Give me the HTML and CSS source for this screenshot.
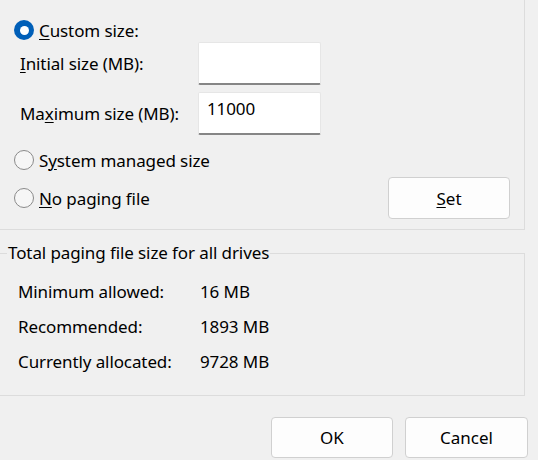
FILE: index.html
```html
<!DOCTYPE html>
<html>
<head>
<meta charset="utf-8">
<link rel="stylesheet" href="styles.css">
</head>
<body>
<div class="page">
  <div class="group-top">
    <label class="radio-row">
      <span class="radio checked"></span>
      <span class="radio-text"><u>C</u>ustom size:</span>
    </label>
    <div class="field-row first">
      <span class="field-label"><u>I</u>nitial size (MB):</span>
      <div class="input"></div>
    </div>
    <div class="field-row">
      <span class="field-label">Ma<u>x</u>imum size (MB):</span>
      <div class="input">11000</div>
    </div>
    <label class="radio-row system">
      <span class="radio"></span>
      <span class="radio-text">S<u>y</u>stem managed size</span>
    </label>
    <div class="nopaging-row">
      <label class="radio-row inline">
        <span class="radio"></span>
        <span class="radio-text"><u>N</u>o paging file</span>
      </label>
      <button class="btn set"><u>S</u>et</button>
    </div>
  </div>

  <fieldset class="group-total">
    <legend>Total paging file size for all drives</legend>
    <div class="stats">
      <span>Minimum allowed:</span><span>16 MB</span>
      <span>Recommended:</span><span>1893 MB</span>
      <span>Currently allocated:</span><span>9728 MB</span>
    </div>
  </fieldset>

  <div class="actions">
    <button class="btn ok">OK</button>
    <button class="btn cancel">Cancel</button>
  </div>
</div>
</body>
</html>
```
FILE: styles.css
```css
* { box-sizing: border-box; }
html, body {
  margin: 0;
  padding: 0;
  background: #f0f0f0;
}
body {
  font-family: "Noto Sans", "Open Sans", sans-serif;
  font-size: 17px;
  letter-spacing: -0.1px;
  color: #000;
  overflow: hidden;
}
.page {
  width: 538px;
  height: 460px;
  overflow: hidden;
}
u { text-decoration-thickness: 1px; text-underline-offset: 2px; }

.group-top {
  margin: -20px 0 0 -20px;
  width: 545px;
  height: 250px;
  border: 1px solid #dcdcdc;
  padding: 39px 14px 0 33px;
  display: flex;
  flex-direction: column;
}
.radio-row {
  display: flex;
  align-items: center;
  height: 20px;
  gap: 5px;
}
.radio {
  width: 20px;
  height: 20px;
  border-radius: 50%;
  border: 1px solid #8a8a8a;
  background: #f6f6f6;
  flex: none;
  position: relative;
}
.radio.checked {
  border: none;
  background: #005fb8;
}
.radio.checked::after {
  content: "";
  position: absolute;
  left: 5.5px;
  top: 5.5px;
  width: 9px;
  height: 9px;
  border-radius: 50%;
  background: #fff;
}
.field-row {
  display: flex;
  align-items: center;
  margin-top: 7px;
  padding-left: 6px;
}
.field-row.first { margin-top: 2px; }
.field-label {
  width: 178px;
  flex: none;
}
.input {
  width: 123px;
  height: 43px;
  background: #fff;
  border: 1px solid #e6e6e6;
  border-bottom: 2px solid #868686;
  border-radius: 2px;
  padding: 4px 0 0 8px;
  line-height: 24px;
}
.radio-row.system { margin-top: 15px; }
.nopaging-row {
  margin-top: 7px;
  height: 42px;
  display: flex;
  align-items: center;
  justify-content: space-between;
}
.btn {
  font: inherit;
  color: #000;
  background: #fdfdfd;
  border: 1px solid #d0d0d0;
  border-radius: 4px;
  width: 122px;
  height: 42px;
  padding: 0;
}

.group-total {
  margin: 11px 0 0 -20px;
  width: 545px;
  height: 155px;
  border: 1px solid #dcdcdc;
  padding: 0 0 0 37px;
}
.group-total legend {
  margin-left: -11px;
  padding: 0 1px;
  line-height: 24px;
}
.stats {
  margin-top: 9px;
  display: grid;
  grid-template-columns: 182px auto;
  line-height: 35px;
}

.actions {
  margin-top: 21px;
  padding-right: 10px;
  display: flex;
  justify-content: flex-end;
  gap: 12px;
}
.actions .btn {
  height: 41px;
  width: 122px;
}
.actions .btn.cancel { width: 123px; }
```
